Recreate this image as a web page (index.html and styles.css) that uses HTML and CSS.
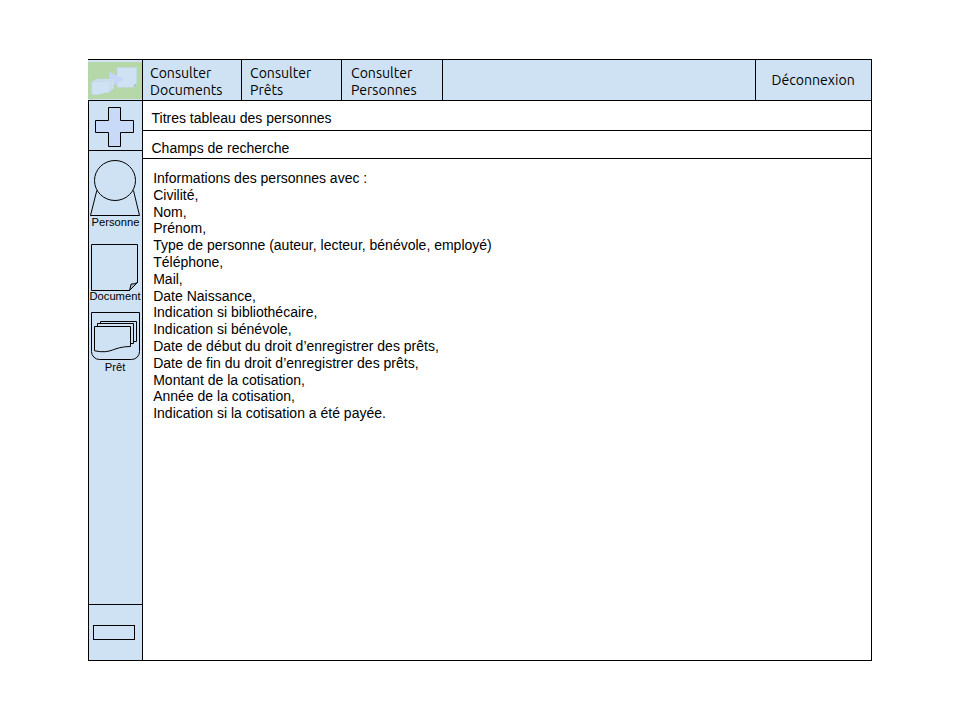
FILE: index.html
```html
<!DOCTYPE html>
<html lang="fr">
<head>
<meta charset="utf-8">
<title>Consulter Personnes</title>
<link rel="stylesheet" href="styles.css">
</head>
<body>
<div class="app">
  <header class="topbar">
    <div class="logo">
      <svg width="54" height="37" viewBox="88 62 54 37">
        <path d="M117 67.500h19.700v16.500l-3 3.300H117z" fill="#cfe2f3" stroke="#bfd6e0" stroke-width=".6"/>
        <path d="M136.700 84l-3 3.300l.5-2.800z" fill="#9fb1c0"/>
        <path d="M109.300 71.500l14.500 7.900l-14.500 8z" fill="#c5d5fa"/>
        <g fill="#cfe2f3" stroke="#bfd6e0" stroke-width=".6">
          <path d="M95.500 79h18v10h-18z"/>
          <path d="M93.500 80.300h18v10.500h-18z"/>
          <path d="M91.700 81.700h18v10.800c-9 0-9 3.500-18 2z"/>
        </g>
      </svg>
    </div>
    <nav class="tabs">
      <a class="tab tab-documents"><span>Consulter</span><span>Documents</span></a>
      <a class="tab tab-loans"><span>Consulter</span><span>Prêts</span></a>
      <a class="tab tab-people"><span>Consulter</span><span>Personnes</span></a>
    </nav>
    <a class="logout"><span>Déconnexion</span></a>
  </header>
  <div class="body">
    <aside class="sidebar">
      <div class="add">
        <svg width="53" height="49" viewBox="89 101 53 49">
          <path d="M108.500 107.500h12v13h13v12h-13v14h-12v-14h-13v-12h13z" fill="#c9daf8" stroke="#000"/>
        </svg>
      </div>
      <div class="tools">
        <svg width="53" height="65" viewBox="89 151 53 65" fill="none" stroke="#000">
          <path d="M96.800 190.500L90.500 215.500h49L133.500 190.500"/>
          <ellipse cx="115" cy="180.500" rx="20.500" ry="20"/>
        </svg>
        <div class="label person">Personne</div>
        <svg class="doc" width="53" height="48" viewBox="89 243 53 48" stroke="#000">
          <path d="M91.500 244.500h46v38l-8 8h-38z" fill="none"/>
          <path d="M129.500 290.500l1.600-6.500q3 .4 6.400-1.500z" fill="#a6b5c2"/>
        </svg>
        <div class="label document">Document</div>
        <svg class="stack" width="53" height="49" viewBox="89 311 53 49" fill="#cfe2f3" stroke="#000">
          <path d="M91.500 312.500h48v39a8 8 0 0 1-8 8h-32a8 8 0 0 1-8-8z"/>
          <path d="M100.500 321.500h36v20h-36z"/>
          <path d="M97.500 323.500h36v20h-36z"/>
          <path d="M94.500 326.500h36v20c-18 0-18 8-36 4.300z"/>
        </svg>
        <div class="label loan">Prêt</div>
      </div>
      <div class="remove"><div class="minus"></div></div>
    </aside>
    <main class="content">
      <div class="titles"><span>Titres tableau des personnes</span></div>
      <div class="search"><span>Champs de recherche</span></div>
      <div class="info">
        <div>Informations des personnes avec :</div>
        <div>Civilité,</div>
        <div>Nom,</div>
        <div>Prénom,</div>
        <div>Type de personne (auteur, lecteur, bénévole, employé)</div>
        <div>Téléphone,</div>
        <div>Mail,</div>
        <div>Date Naissance,</div>
        <div>Indication si bibliothécaire,</div>
        <div>Indication si bénévole,</div>
        <div>Date de début du droit d’enregistrer des prêts,</div>
        <div>Date de fin du droit d’enregistrer des prêts,</div>
        <div>Montant de la cotisation,</div>
        <div>Année de la cotisation,</div>
        <div>Indication si la cotisation a été payée.</div>
      </div>
    </main>
  </div>
</div>
</body>
</html>
```
FILE: styles.css
```css
* { box-sizing: border-box; }
body {
  margin: 0;
  padding: 59px 0 0 88px;
  background: #fff;
  color: #000;
  font-family: "Liberation Sans", Arial, sans-serif;
  font-size: 14px;
}
svg { display: block; }
.app { width: 784px; height: 602px; display: flex; flex-direction: column; }
.topbar {
  display: flex;
  height: 42px;
  background: #cfe2f3;
  border: 1px solid #000;
  border-left: 0;
  font-family: Ubuntu, "Noto Sans", sans-serif;
  font-size: 14.1px;
  line-height: 17px;
}
.logo { width: 55px; padding-top: 2px; border-right: 1px solid #000; }
.logo svg { background: #b6d7a8; }
.tabs { display: flex; flex: 1; }
.tab {
  display: flex;
  flex-direction: column;
  align-items: flex-start;
  padding: 5px 0 0 7px;
  border-right: 1px solid #000;
}
.tab-documents { width: 99px; }
.tab-loans { width: 100px; padding-left: 8px; }
.tab-people { width: 101px; padding-left: 9px; }
.logout {
  width: 116px;
  padding: 12px 0 0 15.5px;
  border-left: 1px solid #000;
}
.body { display: flex; flex: 1; }
.sidebar {
  display: flex;
  flex-direction: column;
  width: 55px;
  background: #cfe2f3;
  border: solid #000;
  border-width: 0 1px 1px;
}
.add { height: 50px; border-bottom: 1px solid #000; }
.tools { flex: 1; }
.label { font-size: 11.2px; line-height: 12px; text-align: center; white-space: nowrap; }
.doc { margin-top: 15px; }
.document { margin: -1px -1px 0 -2px; }
.stack { margin-top: 9px; }
.loan { margin: 1px 0 0 -1px; }
.remove { height: 56px; padding: 20px 0 0 4px; border-top: 1px solid #000; }
.minus { width: 42px; height: 15px; border: 1px solid #000; }
.content {
  display: flex;
  flex-direction: column;
  flex: 1;
  border: solid #000;
  border-width: 0 1px 1px 0;
}
.titles, .search { padding-left: 8.5px; border-bottom: 1px solid #000; line-height: 17px; }
.titles { height: 30px; padding-top: 9px; }
.search { height: 28px; padding-top: 9px; }
.info { padding: 11px 0 0 10.2px; line-height: 16.8px; }
```
